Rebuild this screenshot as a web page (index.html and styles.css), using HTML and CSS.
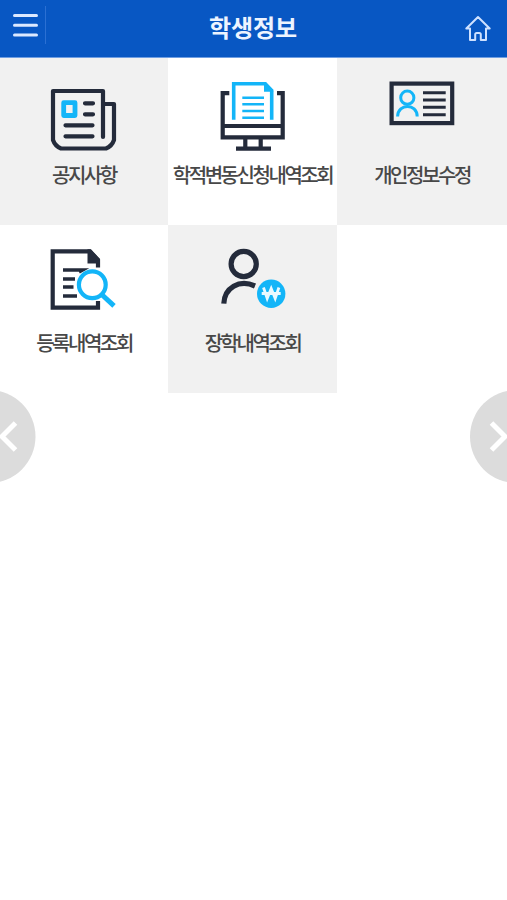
FILE: index.html
```html
<!DOCTYPE html>
<html lang="ko">
<head>
<meta charset="utf-8">
<title>학생정보</title>
<link rel="stylesheet" href="styles.css">
</head>
<body>
<header class="bar">
  <div class="menu">
    <svg width="26" height="26" viewBox="0 0 26 26"><path d="M2.5 3.5H24.5M2.5 13.2H24.5M2.5 22.9H24.5" stroke="#dce9ff" stroke-width="3" stroke-linecap="round"/></svg>
  </div>
  <h1>학생정보</h1>
  <div class="home">
    <svg width="28" height="28" viewBox="0 0 28 28" fill="none" stroke="#cfe1ff" stroke-width="2" stroke-linejoin="round"><path d="M14 3L2.3 14.5H6V26H11.2V20.5Q11.2 19 12.7 19H15.3Q16.8 19 16.8 20.5V26H22V14.5H25.7Z"/></svg>
  </div>
</header>
<main class="grid">
  <a class="tile shade">
    <svg class="icon" viewBox="0 0 72 76"><g class="dark"><path stroke-linejoin="round" stroke-linecap="round" d="M55 59V13H5V62Q7 68 13 70.5H58Q64 68 66 62V26H56"/><path stroke-linecap="round" d="M37 25.3H45M37 36.3H45M17.5 47.3H44.5M17.5 58.3H44.5"/></g><rect class="photo" x="15.7" y="24.7" width="11.3" height="12.8"/></svg>
    <span>공지사항</span>
  </a>
  <a class="tile">
    <svg class="icon" viewBox="0 0 72 76"><g class="dark"><path d="M12.3 15.2H5.7V59.3H65.7V15.2H60M5.7 48H65.7M28.3 60V70M43.7 60V70M19 70.7H54"/></g><g class="blue"><path stroke-width="3.6" d="M16.7 41.7V5.7H48.3L54.7 12.5V41.7"/><path stroke-width="2.6" d="M25.3 19.7H47M25.3 26.3H47M25.3 33H47M25.3 39.7H47"/></g><path d="M47 4L56.5 13.8H47Z" fill="#13b5f8"/></svg>
    <span>학적변동신청내역조회</span>
  </a>
  <a class="tile shade">
    <svg class="icon" viewBox="0 0 72 76"><g class="dark"><rect x="5.6" y="5.6" width="60.6" height="39.5"/><path stroke-width="3" d="M37 14.7H59.7M37 22H59.7M37 29.3H59.7M37 36.7H59.7"/></g><g class="blue" stroke-width="3"><circle cx="21.3" cy="19.7" r="6.6"/><path d="M11.6 38.5C12 25 31 25 31.2 38.5"/></g></svg>
    <span>개인정보수정</span>
  </a>
  <a class="tile low">
    <svg class="icon" viewBox="0 0 72 76"><g class="dark"><path d="M50 22.5V15L41.5 6.3H4.7V62.7H50V56"/><path d="M15 25H34.5L31 27M15 34H27M15 42H25.5M15 51H29" stroke-width="3.6"/></g><path d="M39.5 4.3H43L52 14V18.5H39.5Z" fill="#242b3b"/><g class="blue"><circle cx="44.3" cy="39.7" r="13.4" stroke-width="4.2"/><path stroke-width="5" d="M53.7 49.5L66 60.8"/></g></svg>
    <span>등록내역조회</span>
  </a>
  <a class="tile shade low">
    <svg class="icon" viewBox="0 0 72 76"><g class="dark person"><circle cx="26.7" cy="19" r="12.6"/><path d="M6.8 58.7C7.5 43 22 34 38 41"/></g><circle cx="54.2" cy="48.7" r="14.2" fill="#13b5f8"/><path class="won" d="M46.5 42.5L50.2 53.5L54.2 43.5L58.2 53.5L61.9 42.5M44.7 48.5H63.7"/></svg>
    <span>장학내역조회</span>
  </a>
</main>
<svg class="nav prev" viewBox="0 0 37 93"><circle cx="-11" cy="46.5" r="46.5"/><path d="M15.5 33L2 46.5L15.5 60"/></svg>
<svg class="nav next" viewBox="0 0 37 93"><circle cx="46.5" cy="46.5" r="46.5"/><path d="M21.5 33L35 46.5L21.5 60"/></svg>
</body>
</html>
```
FILE: styles.css
```css
* { box-sizing: border-box; }
body {
  margin: 0;
  height: 900px;
  position: relative;
  overflow: hidden;
  background: #fff;
  font-family: "Noto Sans CJK KR", sans-serif;
}
.bar {
  height: 58px;
  display: grid;
  grid-template-columns: 46px 1fr 46px;
  background: #0857c3;
  border-bottom: 1px solid #6f9ee2;
}
.menu {
  height: 38px;
  margin-top: 6px;
  padding: 6px 0 0 12px;
  border-right: 1px solid #2b70d3;
}
.menu svg, .home svg { display: block; }
.bar h1 {
  margin: 0;
  padding-right: 1px;
  color: #edf4ff;
  font-size: 24px;
  font-weight: 700;
  line-height: 54px;
  letter-spacing: -0.1px;
  text-align: center;
}
.home { padding: 14px 0 0 3px; }
.grid {
  display: grid;
  grid-template-columns: 168px 169px 170px;
  grid-template-rows: 167px 168px;
}
.tile {
  display: flex;
  flex-direction: column;
  align-items: center;
  padding-top: 20px;
}
.shade { background: #f1f1f1; }
.icon {
  width: 72px;
  height: 76px;
  flex: none;
}
.tile span {
  margin-top: 6px;
  color: #484848;
  font-size: 20px;
  font-weight: 500;
  line-height: 30px;
  letter-spacing: -2.45px;
  white-space: nowrap;
}
.low span { margin-top: 7px; }
.dark { fill: none; stroke: #242b3b; stroke-width: 4.2; }
.person { stroke-width: 5.2; }
.blue, .photo { fill: none; stroke: #13b5f8; }
.photo { stroke-width: 4.8; stroke-linejoin: round; }
.won { fill: none; stroke: #e9f9ff; stroke-width: 2.8; }
.nav {
  position: absolute;
  top: 390px;
  width: 37px;
  height: 93px;
}
.prev { left: 0; }
.next { right: 0; }
.nav circle { fill: #dcdcdc; }
.nav path { fill: none; stroke: #fff; stroke-width: 5; }
```
